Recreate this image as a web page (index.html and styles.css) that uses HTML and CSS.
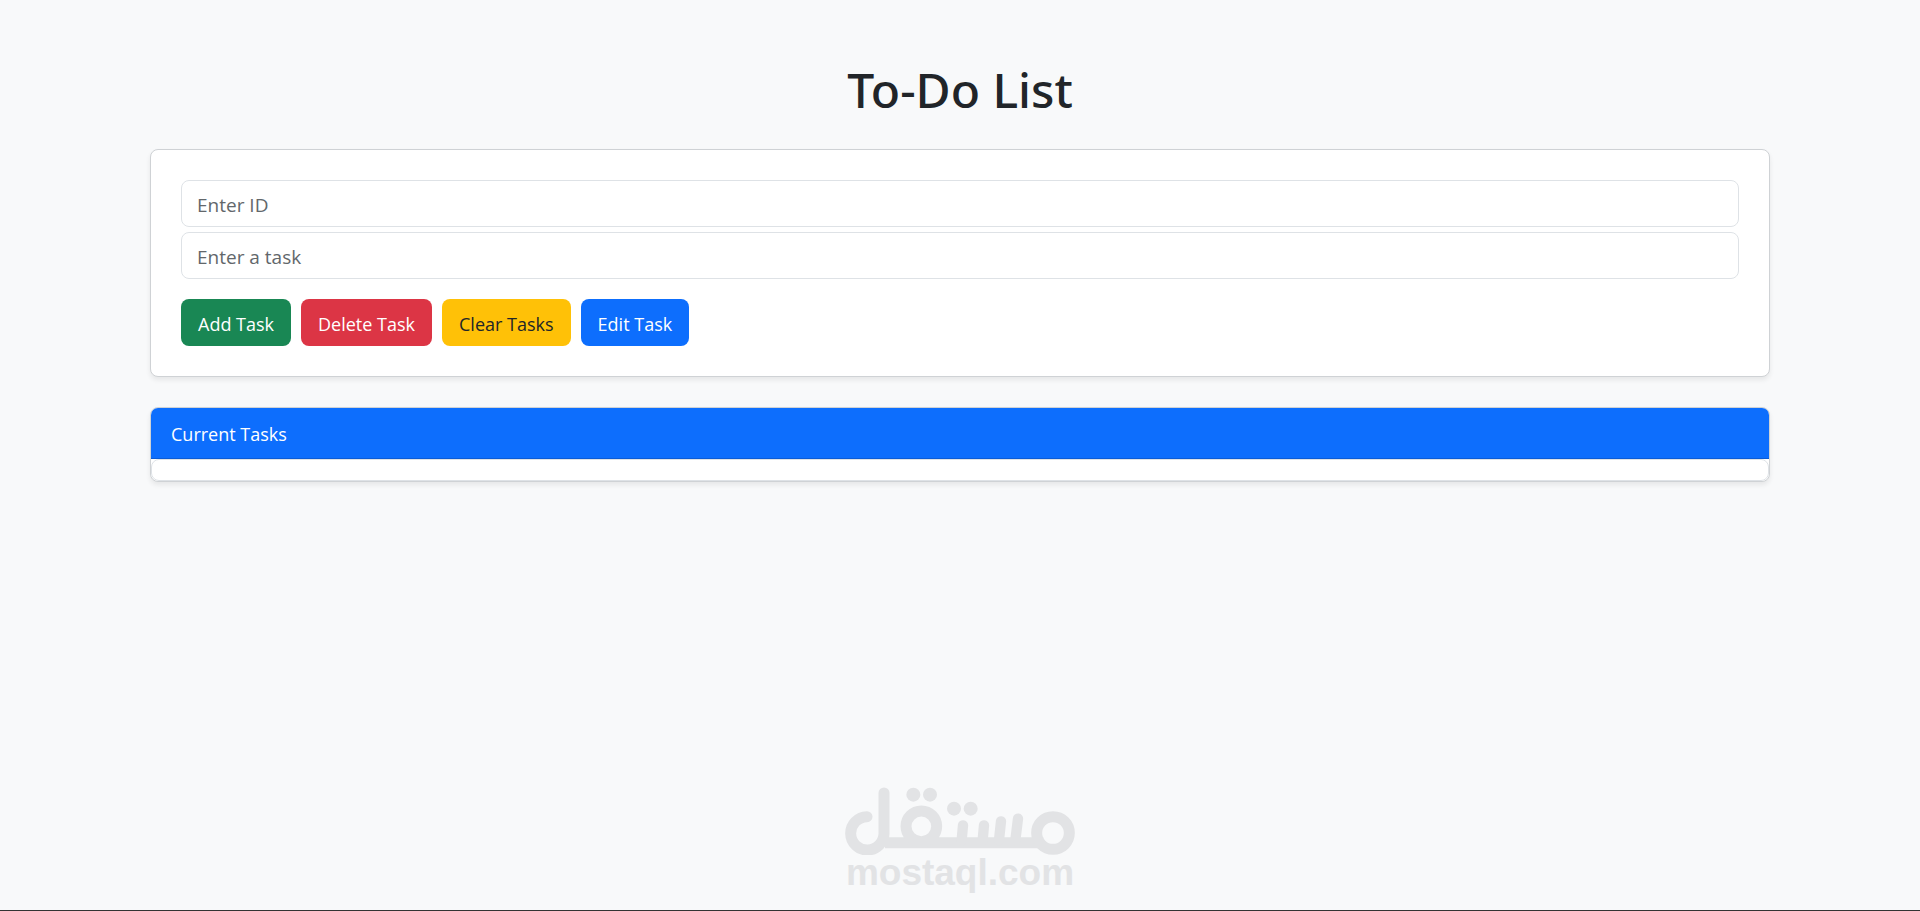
FILE: index.html
```html
<!DOCTYPE html>
<html lang="en">
<head>
    <meta charset="UTF-8">
    <meta name="viewport" content="width=device-width, initial-scale=1.0">
    <title>To-Do List</title>
    <link rel="stylesheet" href="styles.css">
</head>
<body>
    <main class="container">
        <h1>To-Do List</h1>

        <form class="card task-form" id="taskForm">
            <input type="text" id="taskId" class="form-control" placeholder="Enter ID" aria-label="Enter ID">
            <input type="text" id="taskInput" class="form-control" placeholder="Enter a task" aria-label="Enter a task">
            <div class="buttons">
                <button type="button" class="btn btn-add">Add Task</button>
                <button type="button" class="btn btn-delete">Delete Task</button>
                <button type="button" class="btn btn-clear">Clear Tasks</button>
                <button type="button" class="btn btn-edit">Edit Task</button>
            </div>
        </form>

        <section class="card">
            <div class="card-header">Current Tasks</div>
            <div class="task-list" id="taskList"></div>
        </section>
    </main>

    <footer class="footer">
        <svg class="logo" viewBox="45 50 690 205" fill="none" stroke="currentColor" stroke-width="33" stroke-linecap="round" aria-hidden="true">
            <path d="M162 68V188A50 50 0 1 1 111 139"/>
            <path d="M165 217H640" stroke-linecap="butt"/>
            <circle cx="274" cy="168" r="46"/>
            <circle cx="669" cy="188" r="49"/>
            <path d="M399 165L395 210M462 165L458 210M513 153L507 210M564 145L556 210" stroke-width="31"/>
            <g fill="currentColor" stroke="none">
                <circle cx="250" cy="73" r="21"/>
                <circle cx="300" cy="73" r="21"/>
                <circle cx="372" cy="115" r="21"/>
                <circle cx="422" cy="115" r="21"/>
            </g>
        </svg>
        <span class="site">mostaql.com</span>
    </footer>
</body>
</html>
```
FILE: styles.css
```css
* {
    box-sizing: border-box;
}
body {
    display: flex;
    flex-direction: column;
    min-height: 100vh;
    margin: 0;
    background-color: #f8f9fa;
    color: #212529;
    font-family: "Segoe UI", "Open Sans", sans-serif;
    font-size: 18px;
    line-height: 30px;
    border-bottom: 1px solid #333;
}
.container {
    width: 100%;
    max-width: 1650px;
    margin: 0 auto;
    padding: 60px 15px 0;
}
h1 {
    margin: 0 0 29px;
    font-family: "Segoe UI", "Noto Sans", sans-serif;
    font-size: 48px;
    font-weight: 500;
    line-height: 60px;
    text-align: center;
}
.card {
    margin-bottom: 30px;
    background-color: #fff;
    border: 1px solid #cfd2d5;
    border-radius: 8px;
    box-shadow: 0 3px 5px rgba(0, 0, 0, 0.075);
    overflow: hidden;
}
.task-form {
    display: flex;
    flex-direction: column;
    gap: 5px;
    padding: 30px;
}
.form-control {
    width: 100%;
    height: 47px;
    padding: 8px 15px 6px;
    border: 1px solid #dee2e6;
    border-radius: 8px;
    background-color: #fff;
    font: inherit;
    font-size: 19px;
}
.form-control::placeholder {
    color: #62676b;
    opacity: 1;
}
.buttons {
    display: flex;
    flex-wrap: wrap;
    gap: 10px;
    margin-top: 15px;
}
.btn {
    height: 47px;
    padding: 2px 17px 0;
    border: none;
    border-radius: 8px;
    color: #fff;
    font: inherit;
    cursor: pointer;
}
.btn-add {
    background-color: #198754;
}
.btn-delete {
    background-color: #dc3545;
}
.btn-clear {
    background-color: #ffc107;
    color: #212529;
}
.btn-edit {
    background-color: #0d6efd;
}
.card-header {
    padding: 11px 20px 9px;
    background-color: #0d6efd;
    border-bottom: 1px solid #0b5cd6;
    color: #fff;
}
.task-list {
    min-height: 22px;
    border: 1px solid #dee2e6;
    border-radius: 8px;
}
.footer {
    display: flex;
    flex-direction: column;
    align-items: center;
    margin-top: auto;
    padding-bottom: 19px;
    color: #e2e3e5;
}
.logo {
    width: 230px;
}
.site {
    font-family: "Liberation Sans", Arial, sans-serif;
    font-size: 37px;
    font-weight: bold;
    line-height: 36px;
}
```
